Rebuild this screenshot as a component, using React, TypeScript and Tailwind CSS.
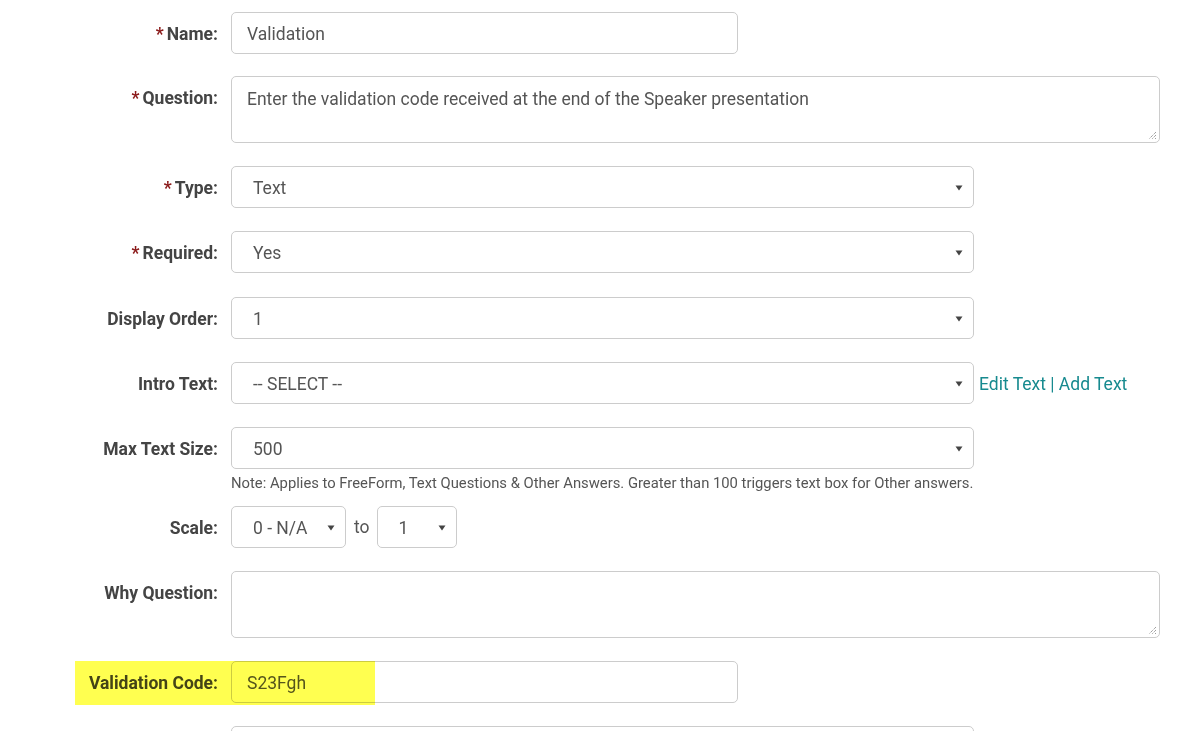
import React from 'react';

const font = { fontFamily: 'Roboto, "Liberation Sans", sans-serif' };

function Label({ text, req }: { text: string; req?: boolean }) {
  return (
    <div className="text-right font-bold text-[#444] leading-[44px] h-[42px]">
      {req && <span className="text-[#8b1a1a] mr-[3px]">*</span>}
      {text}
    </div>
  );
}

function Caret() {
  return (
    <svg width="8" height="6" viewBox="0 0 8 6" className="shrink-0">
      <path d="M0.5 0.5 L7.5 0.5 L4 5.5 Z" fill="#444" />
    </svg>
  );
}

function Select({ value, className }: { value: string; className?: string }) {
  return (
    <div
      className={
        'h-[42px] flex items-center justify-between border border-[#ccc] rounded-[5px] bg-white pl-[21px] pr-[10px] pt-[2px] text-[#555] ' +
        (className ?? '')
      }
    >
      <span>{value}</span>
      <Caret />
    </div>
  );
}

function TextArea({ value }: { value?: string }) {
  return (
    <div className="relative h-[67px] w-[929px] border border-[#ccc] rounded-[5px] bg-white px-[15px] pt-[10px] text-[#555] leading-[24px]">
      {value}
      <svg width="10" height="10" viewBox="0 0 10 10" className="absolute right-[2px] bottom-[2px]">
        <path d="M9 2 L2 9 M9 5 L5 9 M9 8 L8 9" stroke="#777" strokeWidth="1" strokeDasharray="1 1" />
      </svg>
    </div>
  );
}

function Input({ value }: { value?: string }) {
  return (
    <div className="h-[42px] w-[507px] border border-[#ccc] rounded-[5px] px-[15px] pt-[2px] flex items-center text-[#555]">
      {value}
    </div>
  );
}

export default function App() {
  return (
    <div className="bg-white h-[731px] w-[1197px] text-[17.5px] overflow-hidden" style={font}>
      <div className="grid grid-cols-[218px_1fr] gap-x-[13px] pt-[12px]">
        {/* Name */}
        <Label text="Name:" req />
        <Input value="Validation" />
        <div className="col-span-2 h-[22px]" />

        {/* Question */}
        <Label text="Question:" req />
        <TextArea value="Enter the validation code received at the end of the Speaker presentation" />
        <div className="col-span-2 h-[23px]" />

        <Label text="Type:" req />
        <Select value="Text" className="w-[743px]" />
        <div className="col-span-2 h-[23px]" />

        <Label text="Required:" req />
        <Select value="Yes" className="w-[743px]" />
        <div className="col-span-2 h-[24px]" />

        <Label text="Display Order:" />
        <Select value="1" className="w-[743px]" />
        <div className="col-span-2 h-[23px]" />

        <Label text="Intro Text:" />
        <div className="flex items-center gap-[5px]">
          <Select value="-- SELECT --" className="w-[743px]" />
          <span className="text-[#178a8f] pt-[2px]">Edit Text | Add Text</span>
        </div>
        <div className="col-span-2 h-[23px]" />

        <Label text="Max Text Size:" />
        <div>
          <Select value="500" className="w-[743px]" />
          <div className="text-[14.8px] text-[#555] mt-[4px] leading-[20px]">
            Note: Applies to FreeForm, Text Questions &amp; Other Answers. Greater than 100 triggers text box for Other answers.
          </div>
        </div>
        <div className="col-span-2 h-[13px]" />

        <Label text="Scale:" />
        <div className="flex items-center gap-[9px]">
          <Select value="0 - N/A" className="w-[115px]" />
          <span className="text-[#555] -ml-[1px] mr-[-2px]">to</span>
          <Select value="1" className="w-[80px]" />
        </div>
        <div className="col-span-2 h-[23px]" />

        <Label text="Why Question:" />
        <TextArea />
        <div className="col-span-2 h-[23px]" />

        {/* Validation code, with a highlighter mark over it */}
        <div className="relative col-span-2 grid grid-cols-[218px_1fr] gap-x-[13px]">
          <Label text="Validation Code:" />
          <Input value="S23Fgh" />
          <div className="absolute left-[75px] top-0 w-[300px] h-[44px] bg-[#ffff50] mix-blend-multiply pointer-events-none" />
        </div>
        <div className="col-span-2 h-[23px]" />

        <div />
        <div className="h-[42px] w-[743px] border border-[#ccc] rounded-[5px]" />
      </div>
    </div>
  );
}
